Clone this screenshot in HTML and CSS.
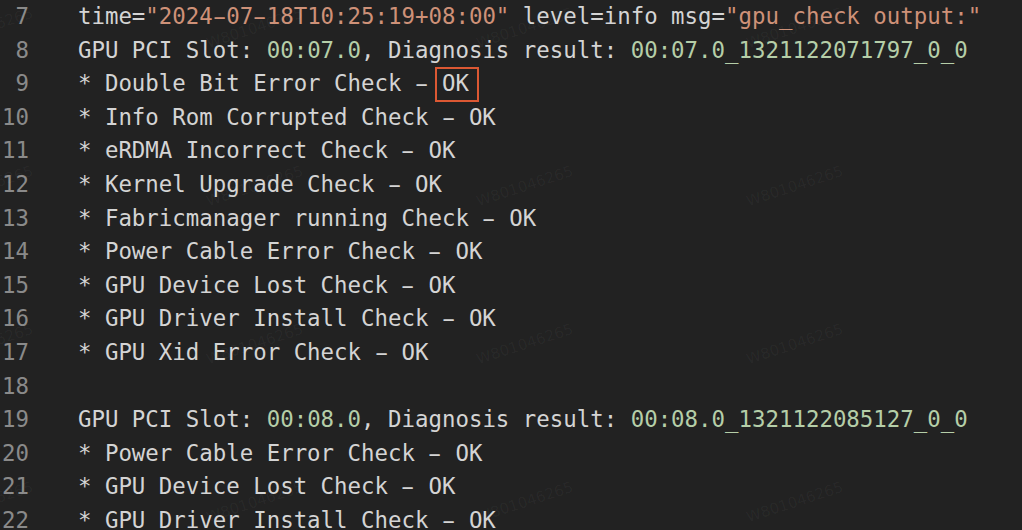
FILE: index.html
```html
<!DOCTYPE html>
<html>
  <head>
    <meta http-equiv="Content-Type" content="text/html; charset=UTF-8">
    <title>gpu_check output</title>
    <link rel="stylesheet" href="styles.css">
  </head>
  <body>
    <div id="editor">
      <div class="linea"><span class="num">7</span><span class="codigo">time=<span class="cadena">"2024<span class="g">-</span>07<span class="g">-</span>18T10:25:19+08:00"</span> level=info msg=<span class="cadena">"gpu_check output:"</span></span></div>
      <div class="linea"><span class="num">8</span><span class="codigo">GPU PCI Slot: <span class="numero">00:07.0</span>, Diagnosis result: <span class="numero">00:07.0_1321122071797_0_0</span></span></div>
      <div class="linea"><span class="num">9</span><span class="codigo">* Double Bit Error Check <span class="g">-</span> <span class="marcado">OK</span></span></div>
      <div class="linea"><span class="num">10</span><span class="codigo">* Info Rom Corrupted Check <span class="g">-</span> OK</span></div>
      <div class="linea"><span class="num">11</span><span class="codigo">* eRDMA Incorrect Check <span class="g">-</span> OK</span></div>
      <div class="linea"><span class="num">12</span><span class="codigo">* Kernel Upgrade Check <span class="g">-</span> OK</span></div>
      <div class="linea"><span class="num">13</span><span class="codigo">* Fabricmanager running Check <span class="g">-</span> OK</span></div>
      <div class="linea"><span class="num">14</span><span class="codigo">* Power Cable Error Check <span class="g">-</span> OK</span></div>
      <div class="linea"><span class="num">15</span><span class="codigo">* GPU Device Lost Check <span class="g">-</span> OK</span></div>
      <div class="linea"><span class="num">16</span><span class="codigo">* GPU Driver Install Check <span class="g">-</span> OK</span></div>
      <div class="linea"><span class="num">17</span><span class="codigo">* GPU Xid Error Check <span class="g">-</span> OK</span></div>
      <div class="linea"><span class="num">18</span><span class="codigo"></span></div>
      <div class="linea"><span class="num">19</span><span class="codigo">GPU PCI Slot: <span class="numero">00:08.0</span>, Diagnosis result: <span class="numero">00:08.0_1321122085127_0_0</span></span></div>
      <div class="linea"><span class="num">20</span><span class="codigo">* Power Cable Error Check <span class="g">-</span> OK</span></div>
      <div class="linea"><span class="num">21</span><span class="codigo">* GPU Device Lost Check <span class="g">-</span> OK</span></div>
      <div class="linea"><span class="num">22</span><span class="codigo">* GPU Driver Install Check <span class="g">-</span> OK</span></div>

      <div id="marcas">
        <span>W801046265</span><span>W801046265</span><span>W801046265</span><span>W801046265</span>
        <span>W801046265</span><span>W801046265</span><span>W801046265</span><span>W801046265</span>
        <span>W801046265</span><span>W801046265</span><span>W801046265</span><span>W801046265</span>
        <span>W801046265</span><span>W801046265</span><span>W801046265</span><span>W801046265</span>
      </div>
    </div>
  </body>
</html>
```

FILE: styles.css
```css
html, body {
  margin: 0;
  padding: 0;
  background: #222222;
}

#editor {
  position: relative;
  overflow: hidden;
  width: 1022px;
  height: 530px;
  background: #222222;
  font-family: "DejaVu Sans Mono", "Liberation Mono", monospace;
  font-size: 22.4px;
  line-height: 33.6px;
  color: #d4d4d4;
}

.linea {
  display: flex;
  height: 33.6px;
  white-space: pre;
}

.num {
  width: 2ch;
  margin-left: 2px;
  text-align: right;
  color: #8a8a8a;
}

.codigo {
  margin-left: 49px;
}

.cadena {
  color: #ce9178;
}

.numero {
  color: #b5cea8;
}

/* guion ancho, como en Menlo */
.g {
  display: inline-block;
  transform: scaleX(1.8);
}

.marcado {
  position: relative;
}

.marcado::after {
  content: "";
  position: absolute;
  left: -7px;
  right: -10px;
  top: -3px;
  bottom: -6px;
  border: 2px solid #dc5833;
}

/* marca de agua */
#marcas {
  position: absolute;
  left: -150px;
  top: -50px;
  display: grid;
  grid-template-columns: repeat(4, 270px);
  grid-auto-rows: 158px;
  pointer-events: none;
}

#marcas span {
  display: flex;
  align-items: center;
  justify-content: center;
  font-family: "DejaVu Sans", sans-serif;
  font-size: 15px;
  color: rgba(255, 255, 255, 0.045);
  transform: rotate(-18deg);
}
```
